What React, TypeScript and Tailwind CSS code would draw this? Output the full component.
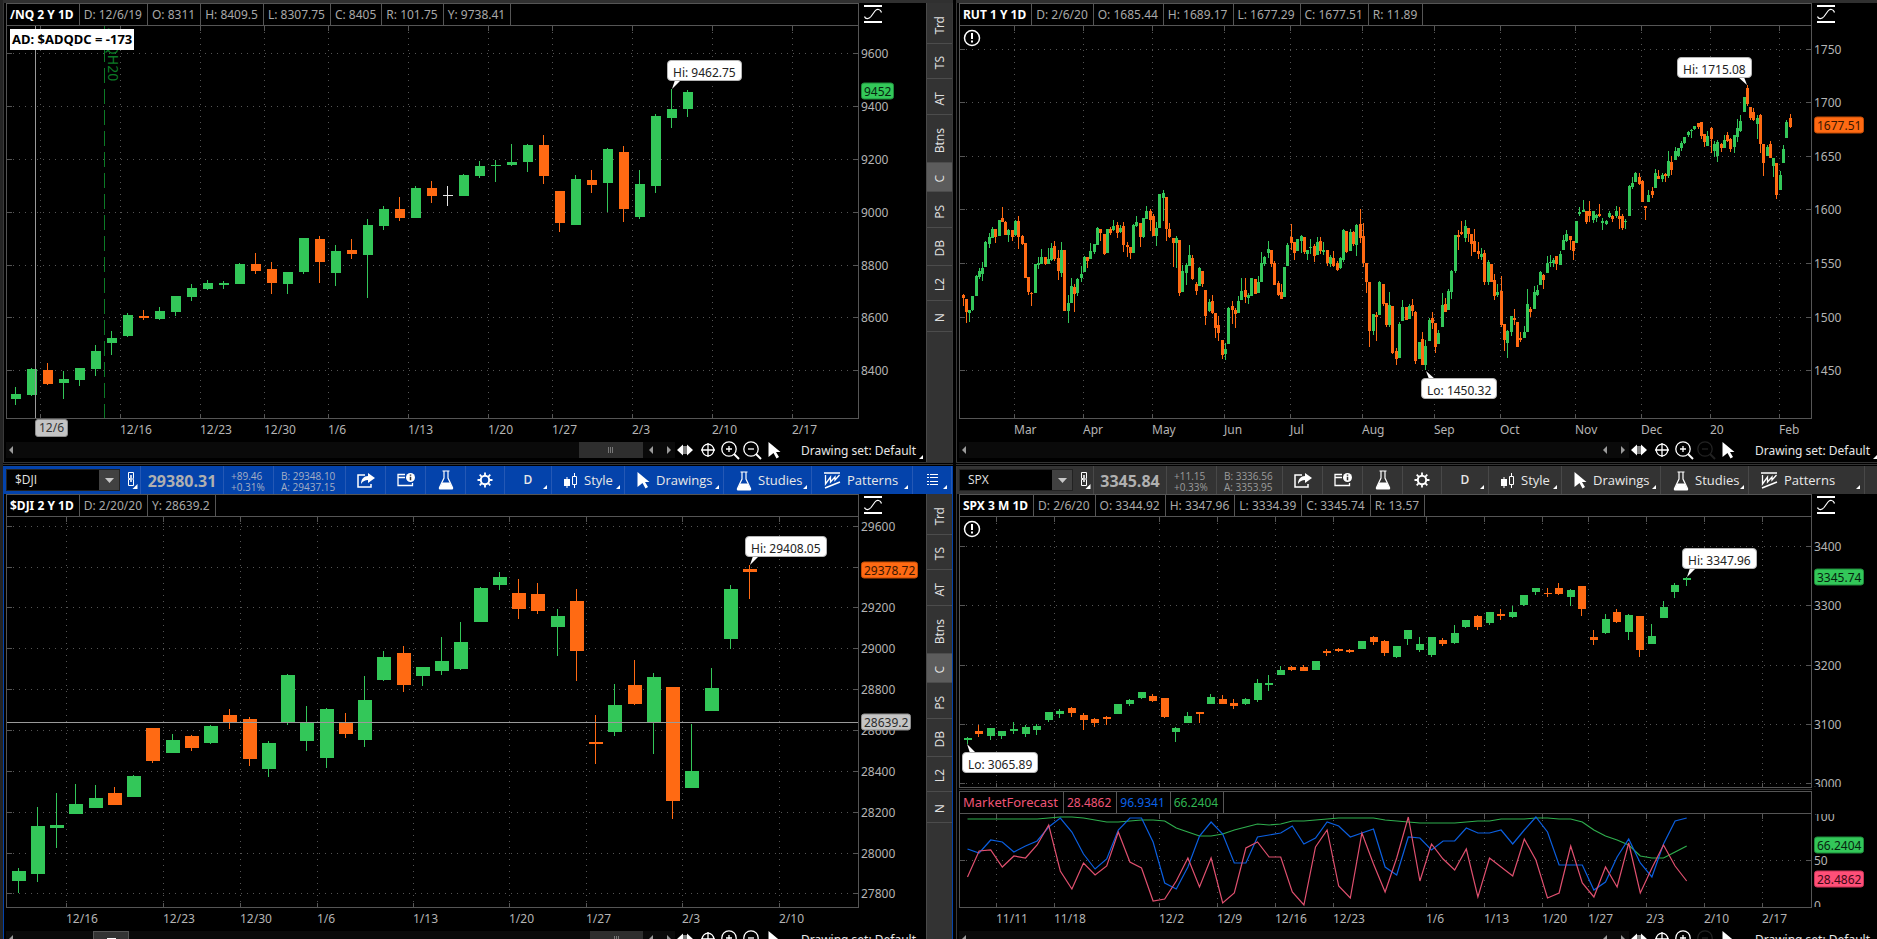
import type { ReactNode } from "react";

type Tick = [pos: number, label: string];
type Tone = "green" | "orange" | "gray" | "pink";

interface View {
  x: number;
  y: number;
  w: number;
  h: number;
}

interface Candle {
  kind: string;
  x: number;
  high: number;
  top: number;
  bottom: number;
  low: number;
}

interface Callout {
  x: number;
  y: number;
  text: string;
  tip: [number, number];
  lean: 1 | -1;
}

interface Badge {
  y: number;
  text: string;
  tone: Tone;
}

const toneClass: Record<Tone, string> = {
  green: "bg-[#33c759] border-[#1f8a3b] text-[#06240f]",
  orange: "bg-[#ff6a13] border-[#c24c06] text-[#3a1600]",
  gray: "bg-[#c4c4c4] border-[#8c8c8c] text-[#2b2b2b]",
  pink: "bg-[#ff4f78] border-[#c73457] text-[#3d0715]",
};

const candleFill: Record<string, string> = {
  g: "#33c759",
  o: "#ff6a13",
  w: "#e5e5e5",
};

// Each candle: kind, high, body top, body bottom, low (canvas units)
function parseCandles(data: string, x0: number, step: number): Candle[] {
  return data
    .trim()
    .split(/\s*,\s*/)
    .map((row, i) => {
      const [kind, ...n] = row.trim().split(" ");
      const [high, top, bottom, low] = n.map(Number);
      return { kind, x: Math.floor(x0 + step * i), high, top, bottom, low };
    });
}

const nqCandles = parseCandles(
  `g 387 394 399 405,g 368 369 395 396,o 363 370 384 385,g 371 379 383 399,g 368 368 380 386,
g 345 351 369 376,g 331 338 343 355,g 313 315 336 337,o 310 316 318 320,g 307 311 319 320,
g 296 296 312 316,g 284 288 297 301,g 280 283 289 290,g 281 283 285 289,g 263 264 284 284,
o 253 264 271 274,o 262 269 283 294,g 272 272 284 294,g 238 238 272 274,o 236 239 262 283,
g 245 251 273 286,o 239 250 254 259,g 219 225 255 298,g 206 209 226 230,o 197 209 218 221,
g 186 188 218 218,o 181 188 196 203,w 186 195 196 206,g 174 175 196 196,g 161 166 176 178,
g 160 165 166 182,g 144 162 165 166,g 144 145 162 172,o 135 145 176 184,o 191 191 223 232,
g 175 179 225 225,o 170 180 185 193,g 148 149 183 212,o 146 152 209 222,g 170 184 217 219,
g 114 116 186 193,g 89 109 118 128,g 90 92 109 117`,
  11,
  16,
);

const rutCandles = parseCandles(
  `o 294 295 298 306,o 299 299 312 323,g 310 310 313 322,g 296 296 310 311,g 275 276 296 296,
g 268 271 277 279,g 262 268 274 281,g 241 242 267 267,g 233 237 244 248,g 227 229 238 238,
o 229 229 237 243,g 220 220 236 236,o 207 218 222 222,o 221 222 235 235,g 229 230 235 242,
o 230 230 237 241,g 220 221 235 236,o 216 221 237 249,o 235 236 244 245,o 243 243 278 278,
o 277 277 292 295,o 292 293 294 306,g 264 264 293 293,g 257 263 265 269,g 249 257 264 264,
o 257 257 264 265,g 248 259 264 264,g 243 248 260 261,o 241 246 259 261,o 250 258 271 280,
g 242 250 273 277,o 250 250 311 311,g 295 303 311 323,g 278 286 303 303,o 284 287 294 312,
g 278 279 293 296,g 266 274 278 282,g 256 257 272 272,o 257 257 261 268,g 243 251 259 259,
g 244 244 252 254,g 227 228 245 245,o 229 229 233 241,o 234 234 254 255,g 229 229 253 253,
o 227 229 233 235,g 220 226 230 231,o 222 225 233 238,g 225 228 232 233,o 222 226 245 252,
o 242 245 247 257,o 247 247 253 259,g 224 225 253 253,g 216 222 226 227,o 223 223 237 247,
g 218 218 237 238,g 206 211 219 219,o 209 211 220 231,o 214 216 236 236,g 222 228 236 246,
g 194 194 228 228,g 190 193 198 221,o 197 197 229 241,o 223 229 237 238,o 238 238 243 267,
g 236 238 243 268,o 240 240 293 296,g 265 271 292 292,g 263 265 273 285,g 245 255 266 266,
o 255 258 279 280,o 282 284 291 295,g 267 268 286 286,o 271 271 284 287,o 290 290 316 325,
g 299 302 311 312,o 295 301 313 314,o 313 313 328 338,o 316 325 333 341,o 340 340 355 359,
g 343 349 354 360,g 307 308 344 344,o 301 306 310 324,o 308 310 314 328,g 296 301 313 313,
g 278 291 300 300,o 278 290 297 303,g 293 295 298 304,g 278 278 296 296,o 279 279 294 294,
g 276 282 293 293,g 252 263 282 282,g 256 257 264 266,g 241 249 253 258,o 250 250 264 267,
o 261 263 285 285,o 281 283 295 296,o 284 292 299 299,g 267 267 297 297,g 243 245 266 266,
o 224 237 243 250,o 242 242 253 260,g 239 239 251 251,g 235 236 241 253,o 237 237 252 254,
g 250 250 254 260,g 239 247 248 254,o 244 246 256 262,g 237 242 255 255,o 237 241 251 254,
g 242 250 252 255,o 250 250 263 266,g 255 257 264 267,o 251 258 266 267,o 261 263 270 271,
g 257 258 268 269,g 229 230 260 262,o 231 231 252 253,g 229 232 251 251,o 231 232 244 246,
g 224 225 245 256,o 209 224 238 243,o 223 236 263 267,o 263 263 282 293,o 282 282 331 347,
g 314 314 331 335,o 312 315 317 341,g 281 282 315 315,o 284 284 304 306,o 303 303 325 327,
g 292 305 325 327,o 306 306 353 354,o 348 351 359 365,g 322 324 358 358,g 300 307 321 321,
o 307 307 320 320,g 304 306 319 319,o 299 305 311 316,o 311 312 361 364,g 342 342 359 359,
o 332 339 365 365,g 340 346 365 370,g 318 320 341 341,o 312 318 323 329,o 323 323 347 353,
g 330 333 344 344,g 293 305 327 327,o 298 304 312 312,g 289 291 310 310,g 270 271 292 299,
g 235 235 271 273,o 230 235 237 250,o 221 232 234 235,g 220 226 238 242,o 228 228 234 242,
o 234 234 244 256,o 229 241 252 252,o 242 251 254 259,g 248 254 257 260,o 250 253 282 285,
g 260 262 282 285,o 264 264 282 282,o 274 280 296 300,g 284 292 295 297,o 276 291 325 327,
o 324 324 340 351,g 330 331 343 358,g 316 316 332 336,o 309 318 320 325,o 322 322 347 347,
o 332 338 340 342,g 326 332 338 338,g 289 304 332 332,o 307 309 312 317,g 286 292 309 309,
g 285 290 295 296,g 271 272 285 285,o 274 275 280 289,g 256 263 273 273,g 255 262 263 267,
g 258 260 263 267,o 256 256 264 270,g 251 254 265 265,g 235 240 250 250,g 230 234 241 242,
o 236 236 240 250,o 241 241 251 260,g 221 221 243 243,g 207 212 214 216,g 200 210 212 212,
o 211 211 222 224,o 201 211 216 222,g 211 211 220 223,g 214 215 218 222,o 204 214 216 217,
g 218 221 223 230,g 220 221 224 225,g 211 213 217 218,o 215 216 219 222,g 206 211 216 218,
o 207 216 219 229,o 214 216 228 230,g 219 221 222 229,g 185 186 216 216,g 177 183 187 189,
g 172 173 182 182,o 173 177 184 185,o 180 181 202 202,o 206 206 208 220,g 190 195 202 202,
o 187 191 195 198,g 169 173 188 188,o 170 176 179 179,g 173 175 179 182,o 173 174 176 182,
g 151 161 176 178,o 156 162 170 175,g 147 151 160 160,g 148 148 156 157,g 141 143 148 151,
g 137 137 143 144,g 131 132 135 137,g 129 130 131 138,g 126 126 129 130,o 123 123 127 129,
o 122 122 136 139,o 134 134 142 147,g 131 136 146 146,o 127 128 139 153,g 141 144 151 157,
g 140 142 156 162,o 143 144 148 152,g 135 140 148 148,o 132 135 141 142,o 138 139 149 152,
g 135 135 147 153,g 119 128 137 142,g 115 121 131 132,g 97 97 112 112,o 85 88 104 106,
o 107 107 118 120,o 108 112 120 121,g 115 118 124 139,o 114 115 144 153,o 144 144 163 176,
g 145 147 156 156,o 141 144 158 158,g 158 158 166 177,o 163 163 195 199,g 171 175 190 190,
g 145 149 163 163,g 120 122 138 138,o 114 118 127 128`,
  962,
  827 / 252,
);

const djiCandles = parseCandles(
  `g 868 871 881 893,g 807 826 874 882,g 793 825 828 848,g 784 804 814 814,g 785 798 808 808,
o 787 793 805 805,g 775 776 797 797,o 728 728 761 763,g 734 740 753 753,o 735 736 748 751,
g 725 726 743 744,o 709 715 722 729,o 717 719 759 766,g 741 743 769 777,g 674 675 723 725,
g 706 723 741 751,g 708 709 758 768,o 713 722 734 738,g 676 700 740 747,g 651 657 680 681,
o 646 653 685 692,g 667 667 676 686,g 637 661 671 675,g 622 642 669 670,g 587 588 622 622,
g 572 577 585 590,o 579 593 609 619,o 583 594 611 614,g 609 616 627 656,o 589 601 651 681,
o 715 742 744 764,g 684 705 732 736,o 660 685 704 705,g 673 677 723 754,o 687 687 801 819,
g 724 771 788 788,g 668 688 711 711,g 585 589 639 649,o 565 569 572 599`,
  12,
  19.25,
);

const spxCandles = parseCandles(
  `g 737 738 740 744,o 725 731 734 737,g 728 728 736 740,g 731 731 736 739,g 722 729 731 734,
g 725 727 734 737,g 724 726 730 735,g 712 712 720 722,g 709 711 714 718,o 707 708 713 717,
o 713 715 720 730,o 718 719 723 727,o 716 717 719 725,g 704 704 714 714,g 699 700 704 706,
g 692 692 698 699,o 694 696 701 702,o 698 698 717 718,g 727 728 732 742,g 712 716 723 723,
o 712 712 714 723,g 694 697 704 704,o 695 699 704 704,o 699 703 706 709,g 698 699 704 705,
g 679 683 700 702,g 675 683 685 691,g 666 670 675 675,o 666 667 670 671,o 665 667 671 671,
g 661 661 670 670,o 649 651 653 656,o 648 649 651 652,o 649 650 652 653,g 641 641 649 649,
o 636 637 642 645,o 640 641 653 656,g 646 646 657 658,g 630 630 639 645,g 637 644 650 652,
g 637 637 655 657,o 638 640 644 646,g 625 633 643 644,g 620 620 627 628,o 615 616 627 630,
g 612 612 623 625,o 609 614 616 620,g 606 612 617 618,g 595 595 605 606,g 588 588 592 595,
o 588 593 594 597,o 583 588 594 595,g 589 590 597 606,o 586 586 609 616,o 630 637 640 645,
g 614 619 633 634,o 609 612 622 623,g 614 615 632 640,o 616 616 650 657,g 624 636 644 644,
g 601 607 618 618,g 583 585 592 598,g 577 578 580 586`,
  964,
  11.6,
);

const forecastLines = [
  {
    color: "#2fae4e",
    points: [
      819, 819, 819, 819, 819, 819, 819, 818, 817, 817, 818, 820, 822, 822, 821, 820, 820, 821, 828, 832, 836,
      836, 834, 830, 827, 824, 825, 824, 821, 821, 820, 819, 818, 818, 818, 818, 820, 821, 822, 823, 823, 823,
      823, 822, 821, 821, 819, 819, 819, 818, 818, 819, 819, 822, 830, 836, 840, 845, 856, 858, 858, 852, 846,
    ],
  },
  {
    color: "#0b5fe0",
    points: [
      849, 853, 840, 842, 852, 846, 841, 827, 818, 832, 854, 869, 859, 830, 818, 818, 842, 883, 889, 867, 836,
      822, 834, 863, 863, 837, 835, 833, 826, 844, 838, 822, 826, 837, 833, 829, 867, 875, 837, 838, 850, 841,
      841, 828, 833, 833, 830, 844, 830, 817, 832, 865, 865, 865, 890, 882, 857, 839, 863, 877, 844, 821, 818,
    ],
  },
  {
    color: "#e0506f",
    points: [
      877, 851, 850, 867, 856, 858, 845, 825, 871, 889, 863, 875, 866, 832, 862, 868, 901, 899, 881, 858, 887,
      858, 903, 893, 848, 842, 857, 857, 892, 905, 847, 830, 886, 898, 833, 864, 892, 858, 817, 881, 844, 859,
      870, 849, 897, 858, 867, 876, 839, 860, 898, 893, 846, 883, 897, 867, 887, 843, 893, 868, 845, 866, 881,
    ],
  },
];

const nqDates: Tick[] = [
  [40, ""], [120, "12/16"], [200, "12/23"], [264, "12/30"], [328, "1/6"], [408, "1/13"],
  [488, "1/20"], [552, "1/27"], [632, "2/3"], [712, "2/10"], [792, "2/17"],
];
const nqPrices: Tick[] = [
  [53, "9600"], [106, "9400"], [159, "9200"], [212, "9000"], [265, "8800"], [317, "8600"], [370, "8400"],
];
const rutDates: Tick[] = [
  [1014, "Mar"], [1083, "Apr"], [1152, "May"], [1224, "Jun"], [1290, "Jul"], [1362, "Aug"],
  [1434, "Sep"], [1500, "Oct"], [1575, "Nov"], [1641, "Dec"], [1710, "20"], [1779, "Feb"],
];
const rutPrices: Tick[] = [
  [49, "1750"], [102, "1700"], [156, "1650"], [209, "1600"], [263, "1550"], [317, "1500"], [370, "1450"],
];
const djiDates: Tick[] = [
  [66, "12/16"], [163, "12/23"], [240, "12/30"], [317, "1/6"], [413, "1/13"],
  [509, "1/20"], [586, "1/27"], [682, "2/3"], [779, "2/10"],
];
const djiPrices: Tick[] = [
  [526, "29600"], [567, ""], [607, "29200"], [648, "29000"], [689, "28800"],
  [730, "28600"], [771, "28400"], [812, "28200"], [853, "28000"], [893, "27800"],
];
const spxDates: Tick[] = [
  [996, "11/11"], [1054, "11/18"], [1159, "12/2"], [1217, "12/9"], [1275, "12/16"], [1333, "12/23"], [1426, "1/6"],
  [1484, "1/13"], [1542, "1/20"], [1588, "1/27"], [1646, "2/3"], [1704, "2/10"], [1762, "2/17"],
];
const spxPrices: Tick[] = [[546, "3400"], [605, "3300"], [665, "3200"], [724, "3100"], [783, "3000"]];

const nqView: View = { x: 7, y: 26, w: 851, h: 392 };
const rutView: View = { x: 960, y: 26, w: 851, h: 392 };
const djiView: View = { x: 7, y: 517, w: 851, h: 390 };
const spxView: View = { x: 960, y: 517, w: 851, h: 270 };
const forecastView: View = { x: 960, y: 814, w: 851, h: 93 };

const leftPct = (v: View, x: number) => `${((x - v.x) / v.w) * 100}%`;
const topPct = (v: View, y: number) => `${((y - v.y) / v.h) * 100}%`;

/* ---------- icons ---------- */

function CurveIcon() {
  return (
    <svg width="18" height="18" viewBox="0 0 18 18" fill="none" stroke="#fff">
      <path d="M0 1h18M0 17h18" strokeWidth="2" />
      <path d="M0.500 11.500c1 3 4.500 2.500 6.500 0l4-5.500c2-2.500 5.500-2 6.500 1.500" strokeWidth="1.200" />
    </svg>
  );
}

function AlertIcon() {
  return (
    <svg width="18" height="18" viewBox="0 0 18 18" fill="none" stroke="#fff">
      <circle cx="9" cy="9" r="7.500" strokeWidth="1.500" />
      <path d="M9 4v6M9 11.500v2" strokeWidth="2" />
    </svg>
  );
}

function PanIcon() {
  return (
    <svg width="16" height="12" viewBox="0 0 16 12" fill="#fff">
      <path d="M0 6L6 0.500v11zM16 6l-6-5.500v11zM6.500 2h1v8h-1zM8.500 2h1v8h-1z" />
    </svg>
  );
}

function TargetIcon() {
  return (
    <svg width="14" height="14" viewBox="0 0 14 14" fill="none" stroke="#fff" strokeWidth="1.300">
      <circle cx="7" cy="7" r="5.800" />
      <path d="M7 0v14M0 7h14" />
    </svg>
  );
}

function MagnifierIcon({ plus, dim }: { plus?: boolean; dim?: boolean }) {
  return (
    <svg width="19" height="19" viewBox="0 0 19 19" fill="none" stroke={dim ? "#222" : "#fff"} strokeWidth="1.300">
      <circle cx="8" cy="8" r="7.200" />
      <path d="M13 13l5 5" strokeWidth="2" />
      <path d={plus ? "M5 8h6M8 5v6" : "M5 8h6"} />
    </svg>
  );
}

function CursorIcon() {
  return (
    <svg width="13" height="17" viewBox="0 0 13 17" fill="#fff">
      <path d="M0.500 0L12.500 10H8l3 5-2.500 1.500L5.500 11l-5 4z" />
    </svg>
  );
}

function CornerMark({ className = "" }: { className?: string }) {
  return (
    <svg width="4" height="4" viewBox="0 0 4 4" className={className}>
      <path d="M4 0v4H0z" fill="#fff" />
    </svg>
  );
}

function LinkIcon() {
  return (
    <svg width="11" height="18" viewBox="0 0 11 18" fill="none" stroke="#fff">
      <path d="M3 7.500H1.500v-6h5v6H5.500" />
      <path d="M4 4v7" strokeWidth="1.500" />
      <path d="M3 8.500H1.500v6h5v-6H5.500" />
      <path d="M10.500 13v5h-5z" fill="#fff" stroke="none" />
    </svg>
  );
}

function ShareIcon() {
  return (
    <svg width="18" height="15" viewBox="0 0 18 15">
      <path d="M8 2H1v12h13v-3" fill="none" stroke="#fff" strokeWidth="1.500" />
      <path d="M11 0l7 5-7 5V7c-3 0-5 1-7 4 0-5 3-8 7-8z" fill="#fff" />
    </svg>
  );
}

function FolderInfoIcon() {
  return (
    <svg width="18" height="14" viewBox="0 0 18 14">
      <path d="M8 1.500H1v11h14.500V10M1 4.500h7" fill="none" stroke="#fff" strokeWidth="1.300" />
      <circle cx="13.500" cy="4.500" r="4.500" fill="#fff" />
      <path d="M13.500 1.500v1.200M13.500 3.700v3.500" stroke="#333" strokeWidth="1.500" />
    </svg>
  );
}

function FlaskIcon() {
  return (
    <svg width="16" height="20" viewBox="0 0 16 20">
      <path d="M4.500 1h7M6 1v7L1.500 17.500q-.5 1.500 1 1.500h11q1.500 0 1-1.500L10 8V1" fill="none" stroke="#fff" strokeWidth="1.200" />
      <path d="M4.300 12.500h7.400l3 5.500q.3 1-1 1H2.300q-1.300 0-1-1z" fill="#fff" />
    </svg>
  );
}

function GearIcon() {
  return (
    <svg width="16" height="16" viewBox="0 0 16 16" fill="none" stroke="#fff">
      <circle cx="8" cy="8" r="4.200" strokeWidth="2" />
      <path
        d="M8 0.500v3M8 12.500v3M0.500 8h3M12.500 8h3M2.700 2.700l2.100 2.100M11.200 11.200l2.100 2.100M2.700 13.300l2.100-2.100M11.200 4.800l2.100-2.100"
        strokeWidth="1.800"
      />
    </svg>
  );
}

function CandlesIcon() {
  return (
    <svg width="14" height="16" viewBox="0 0 14 16">
      <path d="M0 6h6v7H0zM2.500 4h1v11h-1z" fill="#fff" />
      <path d="M8.500 3.500h4v8h-4zM10.500 0v3.500M10.500 11.500V15" fill="none" stroke="#fff" />
    </svg>
  );
}

function PatternsIcon() {
  return (
    <svg width="17" height="17" viewBox="0 0 17 17" fill="none" stroke="#fff">
      <path d="M0 1h16M1 16l15-6" strokeWidth="1.500" />
      <path d="M1.500 3v9l5-7v5l4.500-5v3l4.500-5" strokeWidth="1.300" />
    </svg>
  );
}

function ListIcon() {
  return (
    <svg width="11" height="12" viewBox="0 0 11 12" fill="#fff">
      <path d="M0 0h2v1H0zM3 0h8v1H3zM0 3h2v1H0zM3 3h8v1H3zM0 7h2v1H0zM3 7h8v1H3zM0 10h2v1H0zM3 10h8v1H3z" />
    </svg>
  );
}

function Arrow({ flip }: { flip?: boolean }) {
  return (
    <svg width="4" height="8" viewBox="0 0 4 8" fill="#9a9a9a">
      <path d={flip ? "M0 0l4 4-4 4z" : "M4 0L0 4l4 4z"} />
    </svg>
  );
}

/* ---------- chart pieces ---------- */

function Plot({
  view,
  height,
  xs,
  ys,
  candles = [],
  bodyWidth = 10,
  wickOffset = 4,
  callouts = [],
  children,
  overlay,
}: {
  view: View;
  height: string;
  xs: Tick[];
  ys: Tick[];
  candles?: Candle[];
  bodyWidth?: number;
  wickOffset?: number;
  callouts?: Callout[];
  children?: ReactNode;
  overlay?: ReactNode;
}) {
  const right = view.x + view.w;
  const bottom = view.y + view.h;
  return (
    <div className={`relative ${height}`}>
      <svg
        className="block h-full w-full"
        viewBox={`${view.x} ${view.y} ${view.w} ${view.h}`}
        preserveAspectRatio="none"
        shapeRendering="crispEdges"
      >
        {ys.map(([y]) => (
          <g key={y} stroke="#555">
            <path d={`M${view.x} ${y + 0.5}H${right}`} strokeDasharray="1 5" />
            <path d={`M${view.x} ${y + 0.5}h5M${right - 4} ${y + 0.5}h4`} />
          </g>
        ))}
        {xs.map(([x]) => (
          <g key={x} stroke="#555">
            <path d={`M${x + 0.5} ${view.y}V${bottom}`} strokeDasharray="1 5" />
            <path d={`M${x + 0.5} ${view.y}v5M${x + 0.5} ${bottom - 4}v4`} />
          </g>
        ))}
        {candles.map((c) => (
          <g key={c.x} fill={candleFill[c.kind]}>
            <rect x={c.x + wickOffset} y={c.high} width="1" height={c.low - c.high} />
            <rect x={c.x} y={c.top} width={bodyWidth} height={c.bottom - c.top} />
          </g>
        ))}
        {children}
        {callouts.map((c) => {
          const [tx, ty] = c.tip;
          const base = ty > c.y ? c.y + 20 : c.y + 1;
          return (
            <path
              key={c.text}
              d={`M${tx} ${ty}L${tx + 3 * c.lean} ${base}h${6 * c.lean}z`}
              fill="#fff"
              shapeRendering="auto"
            />
          );
        })}
      </svg>
      {callouts.map((c) => (
        <div
          key={c.text}
          className="absolute h-[21px] whitespace-nowrap rounded border border-[#b5b5b5] bg-white px-[5px] pt-0.5 text-xs leading-5 text-[#222]"
          style={{ left: leftPct(view, c.x), top: topPct(view, c.y) }}
        >
          {c.text}
        </div>
      ))}
      {overlay}
    </div>
  );
}

function PriceAxis({ view, ticks, badges }: { view: View; ticks: Tick[]; badges: Badge[] }) {
  return (
    <div className="relative flex-1 overflow-hidden text-xs leading-4 text-[#b4b4b4]">
      {ticks.map(([y, label]) => (
        <span key={y} className="absolute left-0.5 -translate-y-1/2" style={{ top: topPct(view, y + 1) }}>
          {label}
        </span>
      ))}
      {badges.map((b) => (
        <span
          key={b.text}
          className={`absolute left-0.5 -translate-y-1/2 rounded-[3px] border px-0.5 leading-[15px] ${toneClass[b.tone]}`}
          style={{ top: topPct(view, b.y) }}
        >
          {b.text}
        </span>
      ))}
    </div>
  );
}

function DateAxis({ view, ticks, children }: { view: View; ticks: Tick[]; children?: ReactNode }) {
  return (
    <div className="relative mx-px h-[23px] text-xs leading-[21px] text-[#b4b4b4]">
      {ticks.map(([x, label]) => (
        <span key={x} className="absolute top-0" style={{ left: leftPct(view, x) }}>
          {label}
        </span>
      ))}
      {children}
    </div>
  );
}

function InfoRow({ title, cells }: { title: string; cells: string[] }) {
  return (
    <div className="flex h-[22px] border-b border-[#555] text-xs leading-[21px]">
      <h2 className="whitespace-nowrap border-r border-[#555] pl-[3px] pr-[5px] font-bold text-white">{title}</h2>
      {cells.map((cell) => (
        <span key={cell} className="whitespace-nowrap border-r border-[#555] pl-1 pr-[5px] text-[#a8a8a8]">
          {cell}
        </span>
      ))}
    </div>
  );
}

function ChartRow({
  header,
  plot,
  axis,
  axisWidth,
  icon = true,
}: {
  header: ReactNode;
  plot: ReactNode;
  axis: ReactNode;
  axisWidth: string;
  icon?: boolean;
}) {
  return (
    <div className="flex">
      <div className="min-w-0 flex-1 border border-[#555]">
        {header}
        {plot}
      </div>
      <div className={`flex shrink-0 flex-col ${axisWidth}`}>
        <div className="h-[23px] pl-[5px] pt-0.5">
          {icon && (
            <button type="button" aria-label="Fit price axis" className="block">
              <CurveIcon />
            </button>
          )}
        </div>
        {axis}
        <div className="h-px" />
      </div>
    </div>
  );
}

function ScrollRow({ thumb, dimZoomOut, tail }: { thumb?: string; dimZoomOut?: boolean; tail: string }) {
  return (
    <div className={`flex h-5 items-start ${tail}`}>
      <div className="flex h-4 flex-1 items-center bg-[#0a0a0a] pl-[3px]">
        <button type="button" aria-label="Scroll to start">
          <Arrow />
        </button>
        <div className="flex h-full flex-1 justify-end">
          {thumb && (
            <div className={`flex h-full items-center justify-center gap-px bg-[#2e2e2e] ${thumb}`}>
              <i className="h-1.5 w-px bg-[#777]" />
              <i className="h-1.5 w-px bg-[#777]" />
              <i className="h-1.5 w-px bg-[#777]" />
            </div>
          )}
        </div>
        <div className="flex w-8 items-center justify-between pl-1.5 pr-1">
          <button type="button" aria-label="Scroll left">
            <Arrow />
          </button>
          <button type="button" aria-label="Scroll right">
            <Arrow flip />
          </button>
        </div>
      </div>
      <div className="flex h-4 items-center pl-0.5">
        <button type="button" aria-label="Pan"><PanIcon /></button>
        <button type="button" aria-label="Crosshair" className="ml-2"><TargetIcon /></button>
        <button type="button" aria-label="Zoom in" className="ml-1.5"><MagnifierIcon plus /></button>
        <button type="button" aria-label="Zoom out" className="ml-[3px]" disabled={dimZoomOut}>
          <MagnifierIcon dim={dimZoomOut} />
        </button>
        <button type="button" aria-label="Pointer" className="ml-1.5"><CursorIcon /></button>
        <button type="button" className="ml-5 flex items-end gap-[3px] whitespace-nowrap pt-0.5 text-xs leading-4 text-[#e6e6e6]">
          Drawing set: Default
          <CornerMark />
        </button>
      </div>
    </div>
  );
}

const sideTabs = [
  { label: "Trd", size: "h-[41px]" },
  { label: "TS", size: "h-[35px]" },
  { label: "AT", size: "h-[36px]" },
  { label: "Btns", size: "h-[48px]" },
  { label: "C", size: "h-[29px]", active: true },
  { label: "PS", size: "h-[36px]" },
  { label: "DB", size: "h-[38px]" },
  { label: "L2", size: "h-[35px]" },
  { label: "N", size: "h-[31px]" },
];

function SideTabs() {
  return (
    <nav className="flex w-[26px] shrink-0 flex-col border-l border-[#4a4a4a] bg-[#333] text-xs text-[#dedede]">
      {sideTabs.map((tab) => (
        <button
          key={tab.label}
          type="button"
          className={`flex items-center justify-center border-b border-[#4c4c4c] pt-1 ${tab.size} ${tab.active ? "bg-[#5c5c5c]" : ""}`}
        >
          <span className="rotate-180 leading-none [writing-mode:vertical-rl]">{tab.label}</span>
        </button>
      ))}
    </nav>
  );
}

function ToolButton({
  label,
  text,
  width,
  active,
  menu,
  children,
}: {
  label: string;
  text?: string;
  width: string;
  active?: boolean;
  menu?: boolean;
  children?: ReactNode;
}) {
  return (
    <button
      type="button"
      aria-label={label}
      className={`relative flex shrink-0 items-center border-r text-[13px] text-[#e8e8e8] ${width} ${
        active ? "border-[#2458b5]" : "border-[#484848]"
      } ${text ? "gap-1.5 pl-3 pt-px" : "justify-center"}`}
    >
      {children}
      {text}
      {menu && <CornerMark className="absolute bottom-[5px] right-1" />}
    </button>
  );
}

function Toolbar({
  symbol,
  price,
  change,
  quote,
  priceWidth,
  quoteWidth,
  patternsWidth,
  active,
}: {
  symbol: string;
  price: string;
  change: [string, string];
  quote: [string, string];
  priceWidth: string;
  quoteWidth: string;
  patternsWidth: string;
  active?: boolean;
}) {
  const line = active ? "border-[#2458b5]" : "border-[#484848]";
  const muted = active ? "text-[#a5afc4]" : "text-[#9c9c9c]";
  return (
    <div className={`flex h-7 overflow-hidden font-['Open_Sans','Noto_Sans',sans-serif] ${active ? "bg-[#0443ab]" : "bg-[#333]"}`}>
      <div className={`flex w-[137px] shrink-0 items-center border-r pl-0.5 ${line}`}>
        <div className="flex h-[22px] w-[114px] border border-[#222] bg-black">
          <input
            aria-label="Symbol"
            defaultValue={symbol}
            className="min-w-0 flex-1 bg-black pl-2 text-xs text-[#e4e4e4] outline-none"
          />
          <button type="button" aria-label="Symbol list" className="flex w-5 items-center justify-center bg-[#414141]">
            <svg width="9" height="5" viewBox="0 0 9 5">
              <path d="M0 0h9L4.500 5z" fill="#c8c8c8" />
            </svg>
          </button>
        </div>
        <button type="button" aria-label="Link chart" className="ml-[7px]"><LinkIcon /></button>
      </div>
      <div className={`flex shrink-0 items-center justify-center border-r pt-px text-base font-bold text-[#b0b0b0] ${priceWidth} ${line}`}>
        {price}
      </div>
      <div className={`w-[50px] shrink-0 border-r pl-[7px] pt-[5px] text-[10px] leading-[11px] ${muted} ${line}`}>
        <p>{change[0]}</p>
        <p>{change[1]}</p>
      </div>
      <div className={`shrink-0 whitespace-nowrap border-r pl-[7px] pt-[5px] text-[10px] leading-[11px] ${muted} ${quoteWidth} ${line}`}>
        <p>{quote[0]}</p>
        <p>{quote[1]}</p>
      </div>
      <ToolButton label="Share" width="w-10" active={active}><ShareIcon /></ToolButton>
      <ToolButton label="Symbol info" width="w-10" active={active}><FolderInfoIcon /></ToolButton>
      <ToolButton label="Lab" width="w-10" active={active}><FlaskIcon /></ToolButton>
      <ToolButton label="Settings" width="w-[39px]" active={active}><GearIcon /></ToolButton>
      <ToolButton label="Aggregation" width="w-[47px]" active={active} menu>
        <span className="text-xs font-semibold">D</span>
      </ToolButton>
      <ToolButton label="Style" text="Style" width="w-[73px]" active={active} menu><CandlesIcon /></ToolButton>
      <ToolButton label="Drawings" text="Drawings" width="w-[99px]" active={active} menu><CursorIcon /></ToolButton>
      <ToolButton label="Studies" text="Studies" width="w-[88px]" active={active} menu><FlaskIcon /></ToolButton>
      <ToolButton label="Patterns" text="Patterns" width={patternsWidth} active={active} menu><PatternsIcon /></ToolButton>
      {active && (
        <ToolButton label="Layout list" width="w-[39px]" active menu><ListIcon /></ToolButton>
      )}
    </div>
  );
}

function AlertButton() {
  return (
    <button type="button" aria-label="Alert" className="absolute left-[3px] top-[3px]">
      <AlertIcon />
    </button>
  );
}

function TopStrip() {
  return <div className="h-[3px] bg-[#303030]" />;
}

/* ---------- panels ---------- */

function NasdaqPanel() {
  return (
    <section>
      <TopStrip />
      <div className="flex border-x border-[#3a3a3a]">
        <div className="min-w-0 flex-1 pl-0.5">
          <ChartRow
            axisWidth="w-[67px]"
            header={
              <InfoRow
                title="/NQ 2 Y 1D"
                cells={["D: 12/6/19", "O: 8311", "H: 8409.5", "L: 8307.75", "C: 8405", "R: 101.75", "Y: 9738.41"]}
              />
            }
            plot={
              <Plot
                view={nqView}
                height="h-[392px]"
                xs={nqDates}
                ys={nqPrices}
                candles={nqCandles}
                callouts={[{ x: 667, y: 60, text: "Hi: 9462.75", tip: [672, 89], lean: 1 }]}
                overlay={
                  <>
                    <span
                      className="absolute text-sm leading-4 text-[#0c7a26] [writing-mode:vertical-rl]"
                      style={{ left: leftPct(nqView, 105), top: topPct(nqView, 28) }}
                    >
                      /NQH20
                    </span>
                    <span className="absolute left-[3px] top-[3px] whitespace-nowrap bg-white px-0.5 text-[13px] font-bold leading-[21px] text-black">
                      AD: $ADQDC = -173
                    </span>
                  </>
                }
              >
                <path d="M104.500 26V418" stroke="#0c7a26" strokeDasharray="15 6" />
                <path d="M35.500 26V418" stroke="#9a9a9a" />
              </Plot>
            }
            axis={<PriceAxis view={nqView} ticks={nqPrices} badges={[{ y: 91, text: "9452", tone: "green" }]} />}
          />
          <div className="pr-[67px]">
            <DateAxis view={nqView} ticks={nqDates}>
              <span
                className="absolute top-0 rounded-[3px] border border-[#8c8c8c] bg-[#c4c4c4] px-[3px] leading-4 text-[#333]"
                style={{ left: leftPct(nqView, 35) }}
              >
                12/6
              </span>
            </DateAxis>
          </div>
          <ScrollRow thumb="w-16" tail="pr-[3px]" />
        </div>
        <SideTabs />
      </div>
      <div className="h-[3px] border-y border-[#333]" />
    </section>
  );
}

function RussellPanel() {
  return (
    <section>
      <TopStrip />
      <div className="border-l border-[#3a3a3a] pl-0.5">
        <ChartRow
          axisWidth="w-[65px]"
          header={
            <InfoRow
              title="RUT 1 Y 1D"
              cells={["D: 2/6/20", "O: 1685.44", "H: 1689.17", "L: 1677.29", "C: 1677.51", "R: 11.89"]}
            />
          }
          plot={
            <Plot
              view={rutView}
              height="h-[392px]"
              xs={rutDates}
              ys={rutPrices}
              candles={rutCandles}
              bodyWidth={3}
              wickOffset={1}
              callouts={[
                { x: 1677, y: 57, text: "Hi: 1715.08", tip: [1747, 85], lean: -1 },
                { x: 1421, y: 378, text: "Lo: 1450.32", tip: [1426, 371], lean: 1 },
              ]}
              overlay={<AlertButton />}
            />
          }
          axis={<PriceAxis view={rutView} ticks={rutPrices} badges={[{ y: 125, text: "1677.51", tone: "orange" }]} />}
        />
        <div className="pr-[65px]">
          <DateAxis view={rutView} ticks={rutDates} />
        </div>
        <ScrollRow dimZoomOut tail="" />
      </div>
      <div className="h-[3px] border-y border-[#333]" />
    </section>
  );
}

function DowPanel() {
  return (
    <section className="border-x border-[#0443ab]">
      <Toolbar
        symbol="$DJI"
        price="29380.31"
        change={["+89.46", "+0.31%"]}
        quote={["B: 29348.10", "A: 29437.15"]}
        priceWidth="w-[83px]"
        quoteWidth="w-[72px]"
        patternsWidth="w-[101px]"
        active
      />
      <div className="flex">
        <div className="min-w-0 flex-1 pl-0.5">
          <ChartRow
            axisWidth="w-[67px]"
            header={<InfoRow title="$DJI 2 Y 1D" cells={["D: 2/20/20", "Y: 28639.2"]} />}
            plot={
              <Plot
                view={djiView}
                height="h-[390px]"
                xs={djiDates}
                ys={djiPrices}
                candles={djiCandles}
                bodyWidth={14}
                wickOffset={6}
                callouts={[{ x: 745, y: 536, text: "Hi: 29408.05", tip: [750, 565], lean: 1 }]}
              >
                <path d="M7 722.500H858" stroke="#9a9a9a" />
              </Plot>
            }
            axis={
              <PriceAxis
                view={djiView}
                ticks={djiPrices}
                badges={[
                  { y: 570, text: "29378.72", tone: "orange" },
                  { y: 722, text: "28639.2", tone: "gray" },
                ]}
              />
            }
          />
          <div className="pr-[67px]">
            <DateAxis view={djiView} ticks={djiDates} />
          </div>
          <div className="relative">
            <ScrollRow thumb="w-[53px]" tail="pr-[3px]" />
            <div className="absolute left-[87px] top-0 flex h-5 w-9 justify-center border border-[#555] bg-[#333] pt-1.5">
              <i className="h-0.5 w-[9px] bg-white" />
            </div>
          </div>
        </div>
        <SideTabs />
      </div>
    </section>
  );
}

function ForecastHeader() {
  return (
    <div className="flex h-[22px] border-b border-[#555] text-xs leading-[21px]">
      <h3 className="border-r border-[#555] pl-[3px] pr-[5px] text-[13px] text-[#ee5577]">MarketForecast</h3>
      <span className="border-r border-[#555] pl-[3px] pr-[5px] text-[#ee5577]">28.4862</span>
      <span className="border-r border-[#555] pl-[3px] pr-[5px] text-[#0b63e8]">96.9341</span>
      <span className="border-r border-[#555] pl-[3px] pr-[5px] text-[#30b552]">66.2404</span>
    </div>
  );
}

function SpxPanel() {
  return (
    <section className="border-l border-[#3a3a3a]">
      <Toolbar
        symbol="SPX"
        price="3345.84"
        change={["+11.15", "+0.33%"]}
        quote={["B: 3336.56", "A: 3353.95"]}
        priceWidth="w-[73px]"
        quoteWidth="w-[66px]"
        patternsWidth="w-[116px]"
      />
      <div className="pl-0.5">
        <ChartRow
          axisWidth="w-[65px]"
          header={
            <InfoRow
              title="SPX 3 M 1D"
              cells={["D: 2/6/20", "O: 3344.92", "H: 3347.96", "L: 3334.39", "C: 3345.74", "R: 13.57"]}
            />
          }
          plot={
            <Plot
              view={spxView}
              height="h-[270px]"
              xs={spxDates}
              ys={spxPrices}
              candles={spxCandles}
              bodyWidth={8}
              wickOffset={3}
              callouts={[
                { x: 1682, y: 548, text: "Hi: 3347.96", tip: [1687, 577], lean: 1 },
                { x: 962, y: 752, text: "Lo: 3065.89", tip: [967, 744], lean: 1 },
              ]}
              overlay={<AlertButton />}
            />
          }
          axis={<PriceAxis view={spxView} ticks={spxPrices} badges={[{ y: 577, text: "3345.74", tone: "green" }]} />}
        />
        <div className="h-[3px] pr-[65px] pt-px">
          <div className="h-px bg-[#333]" />
        </div>
        <ChartRow
          axisWidth="w-[65px]"
          icon={false}
          header={<ForecastHeader />}
          plot={
            <Plot view={forecastView} height="h-[93px]" xs={spxDates} ys={[[860, "50"]]}>
              {forecastLines.map((line) => (
                <polyline
                  key={line.color}
                  points={line.points.map((y, i) => `${967.5 + 11.6 * i},${y}`).join(" ")}
                  fill="none"
                  stroke={line.color}
                  strokeWidth="1.200"
                  shapeRendering="auto"
                />
              ))}
            </Plot>
          }
          axis={
            <PriceAxis
              view={forecastView}
              ticks={[[816, "100"], [860, "50"], [905, "0"]]}
              badges={[
                { y: 845, text: "66.2404", tone: "green" },
                { y: 879, text: "28.4862", tone: "pink" },
              ]}
            />
          }
        />
        <div className="pr-[65px]">
          <DateAxis view={spxView} ticks={spxDates} />
        </div>
        <ScrollRow dimZoomOut tail="" />
      </div>
    </section>
  );
}

export default function App() {
  return (
    <main className="flex h-screen overflow-hidden bg-black font-['Noto_Sans','Open_Sans',sans-serif]">
      <div className="w-[3px] shrink-0 bg-[#242424]" />
      <div className="grid min-w-0 flex-1 grid-cols-[950fr_921fr] content-start gap-x-[3px] gap-y-px">
        <NasdaqPanel />
        <RussellPanel />
        <DowPanel />
        <SpxPanel />
      </div>
    </main>
  );
}
